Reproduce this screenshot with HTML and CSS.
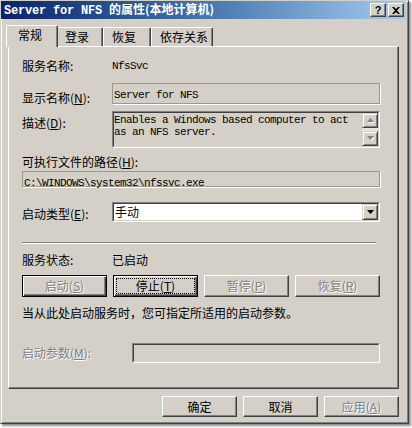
FILE: index.html
```html
<!DOCTYPE html>
<html lang="zh-CN">
<head>
<meta charset="utf-8">
<title>Server for NFS 的属性</title>
<link rel="stylesheet" href="styles.css">
</head>
<body>
<div class="window">
  <div class="titlebar">
    <span class="title"><span class="title-lat">Server for NFS </span>的属性(本地计算机)</span>
    <div class="tb-btns">
      <span class="tbtn help">?</span>
      <span class="tbtn"><svg width="8" height="7" viewBox="0 0 8 7"><path d="M0 0H2L4 2L6 0H8L5 3.5L8 7H6L4 5L2 7H0L3 3.5Z" fill="#000"/></svg></span>
    </div>
  </div>
  <div class="client">
    <div class="tabs">
      <div class="tab selected t1">常规</div>
      <div class="tab t2">登录</div>
      <div class="tab t3">恢复</div>
      <div class="tab t4">依存关系</div>
    </div>
    <div class="panel">
      <div class="row r1"><span class="lbl w90">服务名称:</span><span class="mono">NfsSvc</span></div>
      <div class="row r2">
        <span class="lbl w90 off7">显示名称(<u>N</u>):</span>
        <div class="edit ro disp"><span class="mono">Server for NFS</span></div>
      </div>
      <div class="row r3">
        <span class="lbl w90 off4">描述(<u>D</u>):</span>
        <div class="sunk desc">
          <div class="sunk-in desc-in">
            <div class="desc-text mono">Enables a Windows based computer to act<br>as an NFS server.</div>
            <div class="vscroll">
              <div class="sbtn"><svg width="7" height="5" viewBox="0 0 7 5"><path d="M4.5 1L8 5H1Z" fill="#fff"/><path d="M3.5 0L7 4H0Z" fill="#808080"/></svg></div>
              <div class="sbtn"><svg width="7" height="5" viewBox="0 0 7 5"><path d="M1 1H8L4.5 5Z" fill="#fff"/><path d="M0 0H7L3.5 4Z" fill="#808080"/></svg></div>
            </div>
          </div>
        </div>
      </div>
      <div class="lbl r4">可执行文件的路径(<u>H</u>):</div>
      <div class="edit ro path"><span class="mono">C:\WINDOWS\system32\nfssvc.exe</span></div>
      <div class="row r5">
        <span class="lbl w90 off4">启动类型(<u>E</u>):</span>
        <div class="sunk sel">
          <div class="sunk-in sel-in">
            <span class="sel-val">手动</span>
            <div class="sbtn drop"><svg width="7" height="4" viewBox="0 0 7 4"><path d="M0 0H7L3.5 4Z" fill="#000"/></svg></div>
          </div>
        </div>
      </div>
      <div class="sep"></div>
      <div class="row r6"><span class="lbl w90">服务状态:</span><span class="lbl">已启动</span></div>
      <div class="btnrow">
        <div class="btn default disabled">启动(<u>S</u>)</div>
        <div class="btn focus"><span class="focus-rect">停止(<u>T</u>)</span></div>
        <div class="btn disabled">暂停(<u>P</u>)</div>
        <div class="btn disabled">恢复(<u>R</u>)</div>
      </div>
      <div class="lbl note">当从此处启动服务时，您可指定所适用的启动参数。</div>
      <div class="row r8">
        <span class="lbl w110 off2 dis-text">启动参数(<u>M</u>):</span>
        <div class="sunk param"><div class="sunk-in param-in"></div></div>
      </div>
    </div>
    <div class="footer">
      <div class="btn fbtn">确定</div>
      <div class="btn fbtn">取消</div>
      <div class="btn fbtn disabled">应用(<u>A</u>)</div>
    </div>
  </div>
</div>
</body>
</html>
```
FILE: styles.css
```css
* { box-sizing: border-box; }
html, body { margin: 0; padding: 0; background: #fff; }
body {
  width: 412px;
  height: 428px;
  overflow: hidden;
  font-family: "Noto Sans CJK SC", "Liberation Sans", sans-serif;
  font-size: 12px;
  color: #000;
}
u { text-decoration: underline; text-underline-offset: 1px; }

.window {
  width: 409px;
  height: 424px;
  background: #d4d0c8;
  border: 1px solid;
  border-color: #d4d0c8 #404040 #404040 #d4d0c8;
  box-shadow: inset 1px 1px #fff, inset -1px -1px #808080, 2px 2px 2px rgba(0,0,0,0.45);
  padding: 0 2px 2px 0;
  display: flex;
  flex-direction: column;
}

.titlebar {
  height: 18px;
  background: linear-gradient(90deg, #0a246a 0%, #3a6ea5 45%, #a6caf0 100%);
  display: flex;
  align-items: center;
  justify-content: space-between;
  padding: 0 2px 0 3px;
  color: #fff;
  font-weight: bold;
}
.title { line-height: 18px; white-space: nowrap; font-size: 12px; }
.title-lat {
  font-family: "Liberation Mono", monospace;
  font-size: 12px;
  letter-spacing: -0.2px;
  white-space: pre;
}
.tb-btns { display: flex; gap: 2px; }
.tbtn {
  width: 16px;
  height: 14px;
  background: #d4d0c8;
  border: 1px solid;
  border-color: #fff #404040 #404040 #fff;
  box-shadow: inset -1px -1px #808080;
  display: flex;
  align-items: center;
  justify-content: center;
  color: #000;
}
.tbtn.help {
  font-family: "Liberation Sans", sans-serif;
  font-size: 11px;
  font-weight: bold;
  line-height: 12px;
}

.client { padding: 6px 7px 0 7px; }

.tabs {
  height: 21px;
  display: flex;
  align-items: flex-end;
}
.tab {
  height: 19px;
  line-height: 18px;
  padding-left: 8px;
  background: #d4d0c8;
  border-top: 1px solid #fff;
  border-left: 1px solid #fff;
  border-right: 1px solid #404040;
  box-shadow: inset -1px 0 #808080;
  border-radius: 2px 2px 0 0;
  white-space: nowrap;
}
.t1 { width: 48px; }
.t2 { width: 47px; }
.t3 { width: 48px; }
.t4 { width: 62px; }
.tab.selected {
  position: relative;
  z-index: 1;
  width: 52px;
  height: 22px;
  margin: 0 -2px -1px -2px;
  padding-left: 11px;
}

.panel {
  height: 343px;
  border: 1px solid;
  border-color: #fff #404040 #404040 #fff;
  box-shadow: inset -1px -1px #808080;
  padding: 11px 18px 0 13px;
}

.row { display: flex; align-items: flex-start; }
.lbl { line-height: 16px; white-space: nowrap; }
.w90 { width: 90px; flex: none; }
.w110 { width: 110px; flex: none; }
.off7 { padding-top: 7px; }
.off4 { padding-top: 4px; }
.off2 { padding-top: 2px; }

.mono {
  font-family: "Liberation Mono", monospace;
  font-size: 11px;
  letter-spacing: -0.6px;
  white-space: pre;
}
.r1 { height: 16px; align-items: center; }
.r1 .mono { line-height: 16px; }

.edit.ro {
  border: 1px solid #9a9890;
  box-shadow: 1px 1px #fff;
  background: #d4d0c8;
  padding: 0 0 0 1px;
}
.r2 { margin-top: 9px; height: 21px; }
.disp { width: 268px; height: 21px; }
.disp .mono { line-height: 16px; }

.sunk {
  border: 1px solid;
  border-color: #808080 #fff #fff #808080;
}
.sunk-in {
  height: 100%;
  border: 1px solid;
  border-color: #404040 #d4d0c8 #d4d0c8 #404040;
}

.r3 { margin-top: 7px; height: 37px; }
.desc { width: 268px; height: 37px; }
.desc-in { display: flex; background: #d4d0c8; }
.desc-text { flex: 1; line-height: 12px; padding-top: 1px; }
.vscroll {
  width: 16px;
  display: flex;
  flex-direction: column;
  justify-content: space-between;
  background: #e6e3de;
}
.sbtn {
  width: 16px;
  height: 16px;
  background: #d4d0c8;
  border: 1px solid;
  border-color: #d4d0c8 #404040 #404040 #d4d0c8;
  box-shadow: inset 1px 1px #fff, inset -1px -1px #808080;
  display: flex;
  align-items: center;
  justify-content: center;
}
.vscroll .sbtn { height: 15px; }

.r4 { margin-top: 6px; }
.path { margin-top: 1px; width: 358px; height: 16px; }
.path .mono { line-height: 14px; }

.r5 { margin-top: 15px; height: 20px; }
.sel { width: 268px; height: 20px; }
.sel-in {
  display: flex;
  justify-content: space-between;
  background: #fff;
}
.sel-val { line-height: 16px; padding-left: 1px; }
.drop { flex: none; }

.sep {
  margin-top: 20px;
  width: 354px;
  border-top: 1px solid #808080;
  border-bottom: 1px solid #fff;
}

.r6 { margin-top: 8px; height: 16px; }

.btnrow {
  margin-top: 7px;
  display: flex;
  justify-content: space-between;
}
.btn {
  width: 85px;
  height: 22px;
  background: #d4d0c8;
  border: 1px solid;
  border-color: #fff #404040 #404040 #fff;
  box-shadow: inset -1px -1px #808080;
  display: flex;
  align-items: center;
  justify-content: center;
  line-height: 16px;
  white-space: nowrap;
}
.btn.default {
  border-color: #000;
  box-shadow: inset 1px 1px #fff, inset -1px -1px #404040, inset -2px -2px #808080;
}
.btn.focus {
  border-color: #000;
  box-shadow: inset 1px 1px #fff, inset -1px -1px #404040, inset -2px -2px #808080;
  padding: 2px;
}
.focus-rect {
  flex: 1;
  align-self: stretch;
  display: flex;
  align-items: center;
  justify-content: center;
  border: 1px dotted #000;
}
.btn.disabled, .dis-text {
  color: #808080;
  text-shadow: 1px 1px 0 #fff;
}

.note { margin-top: 8px; }

.r8 { margin-top: 22px; height: 20px; }
.param { width: 248px; height: 20px; }
.param-in { background: #d4d0c8; }

.footer {
  margin-top: 7px;
  display: flex;
  justify-content: flex-end;
  gap: 6px;
}
.fbtn { width: 75px; height: 21px; }
```
